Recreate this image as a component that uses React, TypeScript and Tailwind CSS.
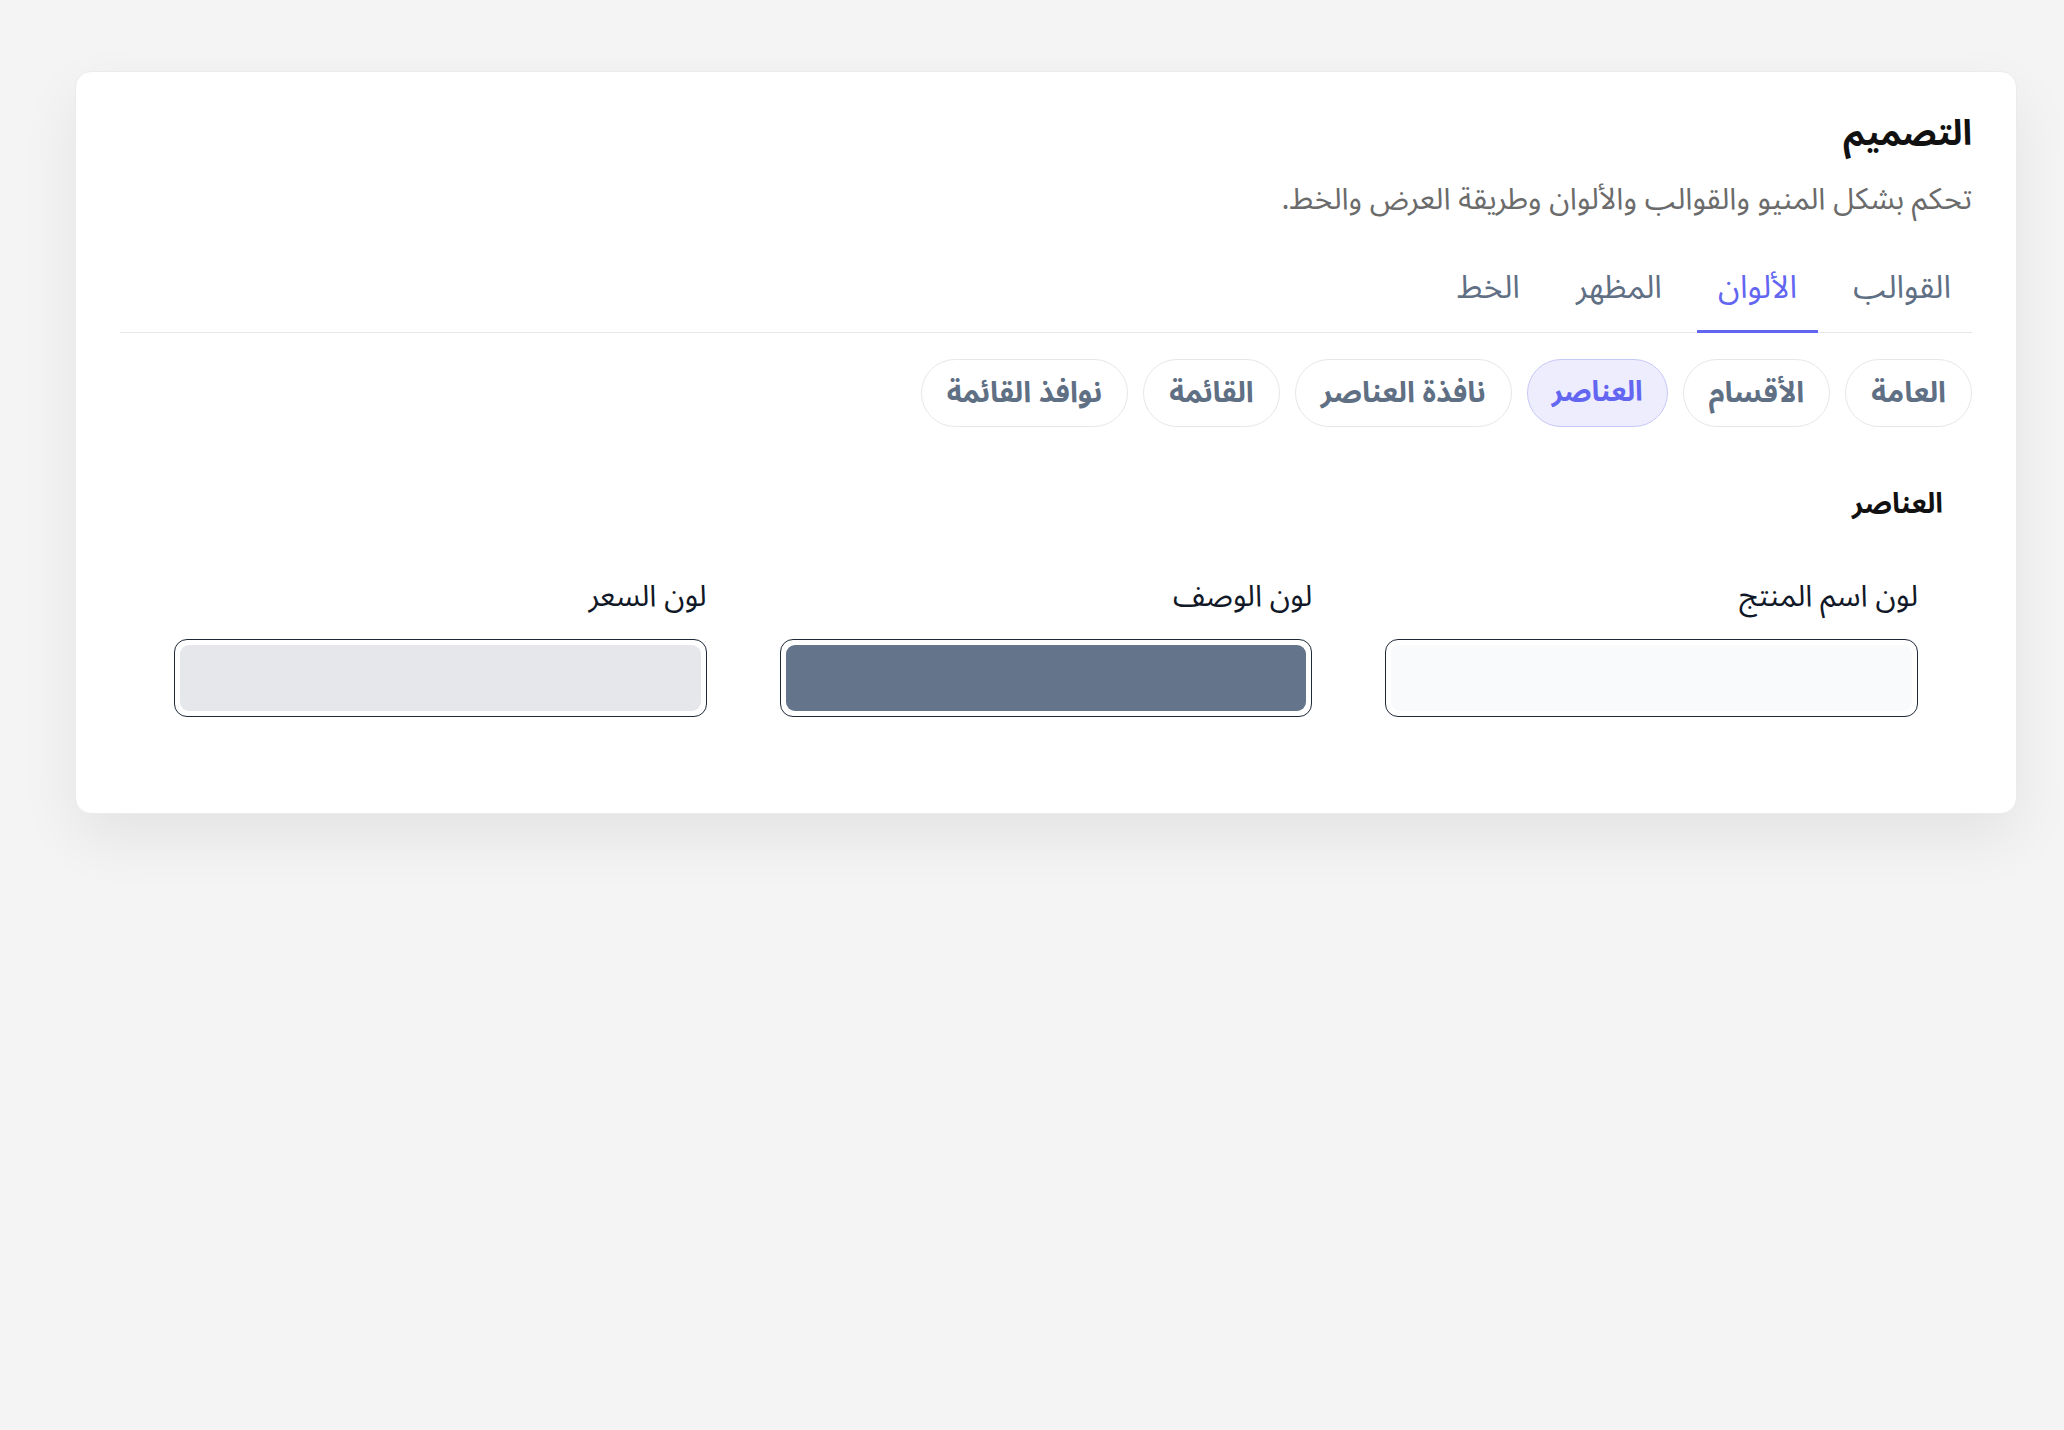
import React from "react";

const FONT = '"Noto Sans Arabic", "Noto Sans", "DejaVu Sans", sans-serif';

export default function App() {
  const tabs = ["القوالب", "الألوان", "المظهر", "الخط"];
  const pills = ["العامة", "الأقسام", "العناصر", "نافذة العناصر", "القائمة", "نوافذ القائمة"];
  const fields = [
    { label: "لون اسم المنتج", color: "#f8fafc" },
    { label: "لون الوصف", color: "#64748b" },
    { label: "لون السعر", color: "#e5e7eb" },
  ];
  return (
    <div className="min-h-[1430px] w-full bg-[#f4f4f4] pt-[71px]" style={{ fontFamily: FONT }}>
      <div
        dir="rtl"
        className="ml-[75px] w-[1942px] rounded-[16px] border border-[#ebebeb] bg-white px-[44px] pt-[34px] pb-[96px] shadow-[0_24px_60px_rgba(0,0,0,0.07)]"
      >
        <h1 className="text-[35px] font-bold leading-[56px] text-[#111111]">التصميم</h1>
        <p className="mt-[14px] text-[30px] leading-[48px] text-[#6b6b6b]">
          تحكم بشكل المنيو والقوالب والألوان وطريقة العرض والخط.
        </p>

        <div className="mt-[32px] flex gap-[14px] border-b border-[#e5e7eb] pt-[12px]">
          {tabs.map((t, i) => (
            <div
              key={t}
              className={
                i === 1
                  ? "-mb-px border-b-[3px] border-[#6366f1] px-[21px] pb-[22px] text-[32px] leading-[40px] text-[#6366f1]"
                  : "-mb-px border-b-[3px] border-transparent px-[21px] pb-[22px] text-[32px] leading-[40px] text-[#5f6f84]"
              }
            >
              {t}
            </div>
          ))}
        </div>

        <div className="mt-[26px] flex gap-[15px]">
          {pills.map((p, i) => (
            <div
              key={p}
              className={
                i === 2
                  ? "flex h-[68px] items-center rounded-full border border-[#c7c9f7] bg-[#ededfd] px-[24px] text-[28px] font-bold leading-[40px] text-[#6366f1]"
                  : "flex h-[68px] items-center rounded-full border border-[#e5e7eb] bg-white px-[25px] text-[29px] font-bold leading-[40px] text-[#5f6f84]"
              }
            >
              {p}
            </div>
          ))}
        </div>

        <h2 className="mt-[58px] pr-[29px] text-[28px] font-bold leading-[40px] text-[#111111]">العناصر</h2>

        <div className="mt-[53px] grid grid-cols-3 gap-[73px] px-[54px]">
          {fields.map((f) => (
            <div key={f.label} className="flex flex-col">
              <label className="text-[30px] leading-[38px] text-[#111827]">{f.label}</label>
              <div className="mt-[23px] h-[78px] rounded-[13px] border border-[#1f2937] bg-white p-[5px]">
                <div className="h-full w-full rounded-[9px]" style={{ backgroundColor: f.color }} />
              </div>
            </div>
          ))}
        </div>
      </div>
    </div>
  );
}
